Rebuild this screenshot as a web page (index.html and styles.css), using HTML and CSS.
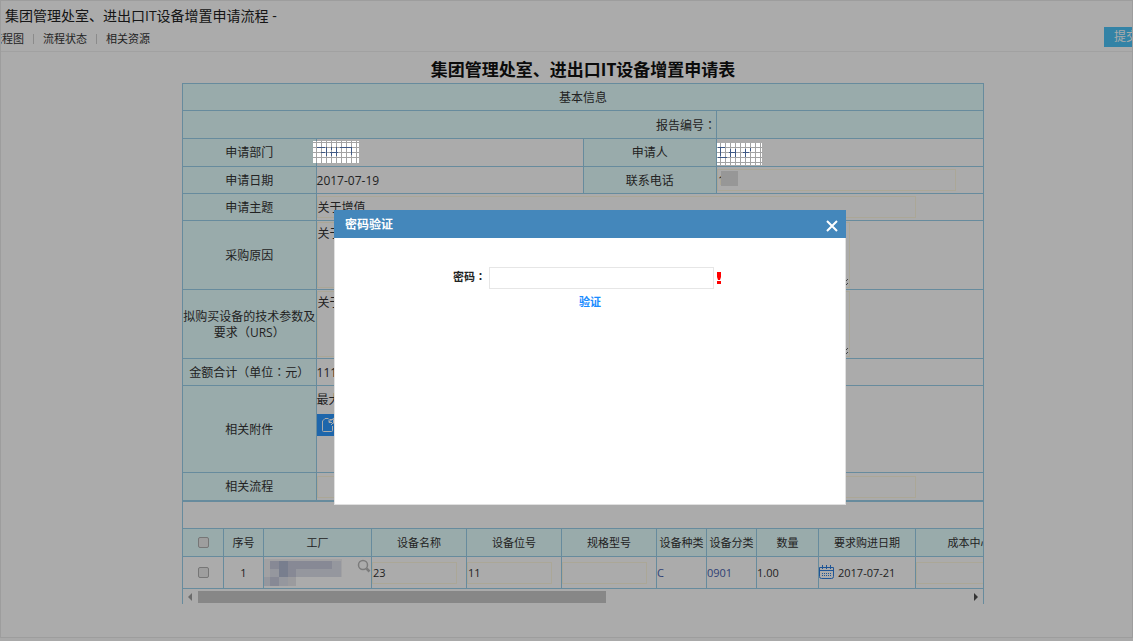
FILE: index.html
```html
<!DOCTYPE html>
<html lang="zh-CN">
  <head>
    <meta charset="UTF-8" />
    <meta name="viewport" content="width=device-width, initial-scale=1.0" />
    <title>集团管理处室、进出口IT设备增置申请流程</title>
    <link rel="stylesheet" href="styles.css">
  </head>
  <body>
    <div class="page">
      <!-- 顶部 -->
      <header class="topbar">
        <h1>集团管理处室、进出口IT设备增置申请流程 -</h1>
        <nav class="tabs">
          <a href="#">流程图</a>
          <a href="#">流程状态</a>
          <a href="#">相关资源</a>
        </nav>
        <button type="button" class="submit">提交</button>
      </header>

      <main class="content">
        <h2>集团管理处室、进出口IT设备增置申请表</h2>

        <!-- 基本信息 -->
        <table class="form-table">
          <colgroup>
            <col class="c-label"><col class="c-value"><col class="c-label"><col class="c-value">
          </colgroup>
          <tbody>
            <tr class="short">
              <th colspan="4">基本信息</th>
            </tr>
            <tr>
              <th colspan="3" class="right">报告编号<span class="punct" lang="zh-TW">：</span></th>
              <th></th>
            </tr>
            <tr>
              <th>申请部门</th>
              <td>
                <svg class="mask mask-dept" width="46" height="22" viewBox="0 0 46 22" aria-hidden="true">
                  <rect width="46" height="22" fill="#fff"/>
                  <path d="M3.500 0v22M8.500 0v22M13.500 0v22M18.500 0v22M23.500 0v22M28.500 0v22M33.500 0v22M38.500 0v22M43.500 0v22M0 1.500h46M0 6.500h46M0 11.500h46M0 16.500h46" stroke="#a3a3a3"/>
                  <path d="M8.500 6v1M13.500 6v9M18.500 6v3M18.500 11v4M23.500 6v9M38.500 6v8M4 6.500h8M27 6.500h11M8 11.500h4M17 11.500h8" stroke="#405a86"/>
                </svg>
              </td>
              <th>申请人</th>
              <td>
                <svg class="mask mask-user" width="45" height="22" viewBox="0 0 45 22" aria-hidden="true">
                  <rect width="45" height="22" fill="#fff"/>
                  <path d="M3.500 0v22M8.500 0v22M13.500 0v22M18.500 0v22M23.500 0v22M28.500 0v22M33.500 0v22M38.500 0v22M43.500 0v22M0 4.500h45M0 9.500h45M0 14.500h45M0 19.500h45" stroke="#a3a3a3"/>
                  <path d="M1 4.500h7M1 14.500h9M3.500 5v8M13.500 6v8M18.500 6v8M28.500 6v8M33.500 5v3M12 9.500h6M26 9.500h6" stroke="#405a86"/>
                </svg>
              </td>
            </tr>
            <tr class="short">
              <th>申请日期</th>
              <td>2017-07-19</td>
              <th><label for="phone">联系电话</label></th>
              <td class="phone">
                <input id="phone" type="text" value="1">
                <span class="smudge"></span>
              </td>
            </tr>
            <tr class="short">
              <th><label for="subject">申请主题</label></th>
              <td colspan="3"><input id="subject" type="text" value="关于增值"></td>
            </tr>
            <tr class="tall">
              <th><label for="reason">采购原因</label></th>
              <td colspan="3"><textarea id="reason">关于</textarea></td>
            </tr>
            <tr class="tall">
              <th><label for="urs">拟购买设备的技术参数及要求<span class="punct" lang="zh-TW">（</span>URS<span class="punct" lang="zh-TW">）</span></label></th>
              <td colspan="3"><textarea id="urs">关于</textarea></td>
            </tr>
            <tr class="short">
              <th>金额合计<span class="punct" lang="zh-TW">（</span>单位<span class="punct" lang="zh-TW">：</span>元<span class="punct" lang="zh-TW">）</span></th>
              <td colspan="3">111</td>
            </tr>
            <tr class="attach">
              <th>相关附件</th>
              <td colspan="3">
                <p>最大</p>
                <button type="button" class="upload" aria-label="相关附件">
                  <svg width="16" height="16" viewBox="0 0 16 16" fill="none" stroke="#fff">
                    <path d="M7.500 1.500H4L1.500 4v9.500q0 1 1 1h8q1 0 1-1V9"/>
                    <path d="M11 5.500H8V2.500M8 5l5-4M10 8l4-4M8.500 2.500h4v4"/>
                  </svg>
                </button>
              </td>
            </tr>
            <tr>
              <th><label for="flow">相关流程</label></th>
              <td colspan="3"><input id="flow" type="text"></td>
            </tr>
          </tbody>
        </table>

        <!-- 设备明细 -->
        <section class="detail">
          <div class="detail-scroll">
            <table class="detail-table">
              <colgroup>
                <col class="w-check"><col class="w-no"><col class="w-plant">
                <col class="w-name"><col class="w-name"><col class="w-name">
                <col class="w-kind"><col class="w-kind"><col class="w-qty">
                <col class="w-date"><col class="w-plant">
              </colgroup>
              <thead>
                <tr>
                  <th><input type="checkbox" aria-label="全选"></th>
                  <th>序号</th>
                  <th>工厂</th>
                  <th>设备名称</th>
                  <th>设备位号</th>
                  <th>规格型号</th>
                  <th>设备种类</th>
                  <th>设备分类</th>
                  <th>数量</th>
                  <th>要求购进日期</th>
                  <th>成本中心</th>
                </tr>
              </thead>
              <tbody>
                <tr>
                  <td class="center"><input type="checkbox" aria-label="1"></td>
                  <td class="center">1</td>
                  <td>
                    <div class="plant">
                      <svg width="88" height="28" viewBox="0 0 88 28" aria-hidden="true">
                        <path fill="#f0f0f3" d="M0 0h78v18H32v9H0z"/>
                        <path fill="#dfe1ec" d="M6 2h71v16H32v9H0v-9h6z"/>
                        <path fill="#c9cddf" d="M6 2h62v8H32v8H15v9H6v-9h9v-8H6z"/>
                        <path fill="#b3bcd4" d="M15 2h9v16h-9z"/>
                        <path fill="#e8e8ec" d="M24 18h8v9h-8z"/>
                      </svg>
                      <svg width="14" height="14" viewBox="0 0 14 14" fill="none" stroke="#b8b8b8" aria-hidden="true">
                        <circle cx="6" cy="6" r="4.500" stroke-width="1.500"/>
                        <path d="M9.500 9.500l3 3" stroke-width="2.500"/>
                      </svg>
                    </div>
                  </td>
                  <td><input type="text" aria-label="设备名称" value="23"></td>
                  <td><input type="text" aria-label="设备位号" value="11"></td>
                  <td><input type="text" aria-label="规格型号"></td>
                  <td class="link">C</td>
                  <td class="link">0901</td>
                  <td>1.00</td>
                  <td>
                    <div class="date">
                      <svg width="15" height="15" viewBox="0 0 15 15" fill="none" stroke="#2f7fe0" aria-hidden="true">
                        <path d="M.5 2.500h14v9q0 2-2 2h-10q-2 0-2-2zM.5 5.500h14M3.500 0v4M7.500 0v4M11.500 0v4"/>
                        <path d="M3 8.500h9M3 10.500h9" stroke-dasharray="1 1"/>
                      </svg>
                      <span>2017-07-21</span>
                    </div>
                  </td>
                  <td><input type="text" aria-label="成本中心"></td>
                </tr>
              </tbody>
            </table>
          </div>
          <div class="scrollbar">
            <span class="arrow arrow-left"></span>
            <div class="track"><div class="thumb"></div></div>
            <span class="arrow arrow-right"></span>
          </div>
        </section>
      </main>
    </div>

    <div class="overlay"></div>

    <!-- 密码验证弹窗 -->
    <div class="dialog" role="dialog" aria-labelledby="dialog-title">
      <div class="dialog-head">
        <h3 id="dialog-title">密码验证</h3>
        <button type="button" class="close" aria-label="关闭">
          <svg width="12" height="12" viewBox="0 0 12 12" stroke="#fff" stroke-width="2">
            <path d="M1 1l10 10M11 1L1 11"/>
          </svg>
        </button>
      </div>
      <form class="dialog-body">
        <div class="field">
          <label for="password">密码<span class="punct" lang="zh-TW">：</span></label>
          <input id="password" type="password">
          <svg width="4" height="12" viewBox="0 0 4 12" fill="#f00" aria-hidden="true">
            <path d="M0 0h4v5l-1 3H1L0 5zM0 9h4v3H0z"/>
          </svg>
        </div>
        <button type="button" class="verify">验证</button>
      </form>
    </div>
  </body>
</html>
```

FILE: styles.css
```css
* {
  box-sizing: border-box;
}

body {
  margin: 0;
  font-family: "Open Sans", "Noto Sans CJK SC", sans-serif;
  font-size: 12px;
  line-height: 15px;
  color: #333;
  background: #fcfcfc;
  overflow: hidden;
}

h1,
h2,
h3,
p {
  margin: 0;
}

a {
  color: inherit;
  text-decoration: none;
}

button {
  padding: 0;
  border: none;
  font: inherit;
  cursor: pointer;
}

/* 标点居中 */
.punct {
  font-family: "Noto Sans CJK TC", sans-serif;
}

.page {
  height: calc(100vh - 3px);
  border: 1px solid #eaeaea;
  background: #fff;
}

/* 顶部 */
.topbar {
  display: grid;
  grid-template-columns: 1fr auto;
  height: 51px;
  padding-top: 5px;
  border-bottom: 1px solid #f0f0f0;
  overflow: hidden;
}

.topbar h1 {
  grid-column: 1 / 3;
  padding-left: 4px;
  font-size: 14px;
  font-weight: normal;
  line-height: 20px;
  color: #222;
}

.tabs {
  display: flex;
  margin-left: -10px;
  font-size: 11px;
  line-height: 24px;
}

.tabs a + a::before {
  content: "";
  display: inline-block;
  height: 10px;
  margin: 0 9px;
  border-left: 1px solid #d0d0d0;
  vertical-align: -1px;
}

.submit {
  height: 20px;
  padding-left: 10px;
  margin-right: -6px;
  color: #fff;
  background: #4cc4f8;
}

/* 申请表 */
.content {
  padding: 6px 148px 0 181px;
}

.content h2 {
  padding-bottom: 2px;
  font-size: 17px;
  line-height: 23px;
  text-align: center;
  color: #111;
}

.form-table {
  width: 100%;
  border-collapse: collapse;
  table-layout: fixed;
}

.c-label {
  width: 16.67%;
}

th,
td {
  height: 28px;
  padding: 0;
  border: 1px solid #9ad0ea;
}

th {
  font-weight: normal;
  background: #e5ffff;
}

td {
  text-align: left;
}

.short th,
.short td {
  height: 27px;
}

.tall th,
.tall td {
  height: 69px;
}

.attach th,
.attach td {
  height: 87px;
}

.attach td {
  padding-top: 6px;
  vertical-align: top;
}

.form-table .right {
  text-align: right;
}

.content input[type="text"],
textarea {
  display: block;
  width: 90%;
  height: 22px;
  padding: 0;
  border: 1px solid #fffae2;
  font: inherit;
  color: inherit;
  background: transparent;
}

textarea {
  width: 80%;
  height: 66px;
  padding-top: 3px;
}

.upload {
  display: flex;
  align-items: center;
  width: 80px;
  height: 22px;
  margin-top: 7px;
  padding-left: 4px;
  background: #2d98ff;
}

/* 遮挡的内容 */
.mask {
  position: absolute;
  z-index: 20;
}

.mask-dept {
  margin: -12px 0 0 -4px;
}

.mask-user {
  margin: -10px 0 0 0;
}

.phone {
  position: relative;
}

.smudge {
  position: absolute;
  left: 4px;
  top: 4px;
  width: 17px;
  height: 15px;
  background: #e2e2e2;
}

/* 设备明细 */
.detail {
  border: 1px solid #9ad0ea;
  border-bottom: none;
  font-size: 11px;
}

.detail-scroll {
  padding-top: 26px;
  overflow: hidden;
}

.detail-table {
  width: 842px;
  margin-left: -1px;
  border-collapse: collapse;
  table-layout: fixed;
}

.detail-table td {
  height: 32px;
}

.w-check {
  width: 41px;
}

.w-no {
  width: 40px;
}

.w-plant {
  width: 108px;
}

.w-name {
  width: 95px;
}

.w-kind {
  width: 50px;
}

.w-qty {
  width: 62px;
}

.w-date {
  width: 97px;
}

.detail-table .center {
  text-align: center;
}

.detail-table input[type="checkbox"] {
  appearance: none;
  display: block;
  width: 11px;
  height: 11px;
  margin: 0 auto;
  border: 1px solid #b0b0b0;
  border-radius: 2px;
  background: #ececec;
}

.link {
  color: #4a63b0;
}

.plant,
.date {
  display: flex;
}

.plant {
  gap: 5px;
}

.date {
  align-items: center;
  gap: 4px;
}

.scrollbar {
  display: flex;
  align-items: center;
  gap: 6px;
  height: 15px;
  padding: 0 5px;
}

.track {
  flex: 1;
}

.thumb {
  width: 53%;
  height: 12px;
  background: #cacaca;
}

.arrow {
  border: 4px solid transparent;
}

.arrow-left {
  border-left: none;
  border-right-color: #a0a0a0;
}

.arrow-right {
  border-right: none;
  border-left-color: #505050;
}

/* 弹窗 */
.overlay {
  position: fixed;
  inset: 0;
  z-index: 10;
  background: rgba(0, 0, 0, 0.33);
}

.dialog {
  position: fixed;
  top: 210px;
  left: 334px;
  z-index: 30;
  width: 512px;
  height: 295px;
  border: 1px solid #e0e0e0;
  border-top: none;
  background: #fff;
}

.dialog-head {
  display: flex;
  justify-content: space-between;
  align-items: center;
  height: 28px;
  margin: 0 -1px;
  padding: 0 8px 0 11px;
  color: #fff;
  background: #4487bb;
}

.dialog-head h3 {
  font-size: 12px;
}

.close {
  display: flex;
  padding-top: 4px;
  background: none;
}

.dialog-body {
  padding-top: 29px;
  font-size: 11px;
  font-weight: bold;
  color: #222;
}

.field {
  display: flex;
  align-items: center;
  padding-left: 118px;
}

.field label {
  padding-bottom: 3px;
}

.field input {
  width: 225px;
  height: 22px;
  margin: 0 3px;
  border: 1px solid #e6e6e6;
}

.verify {
  display: block;
  margin: 5px auto 0;
  color: #1a8cff;
  background: none;
}
```
